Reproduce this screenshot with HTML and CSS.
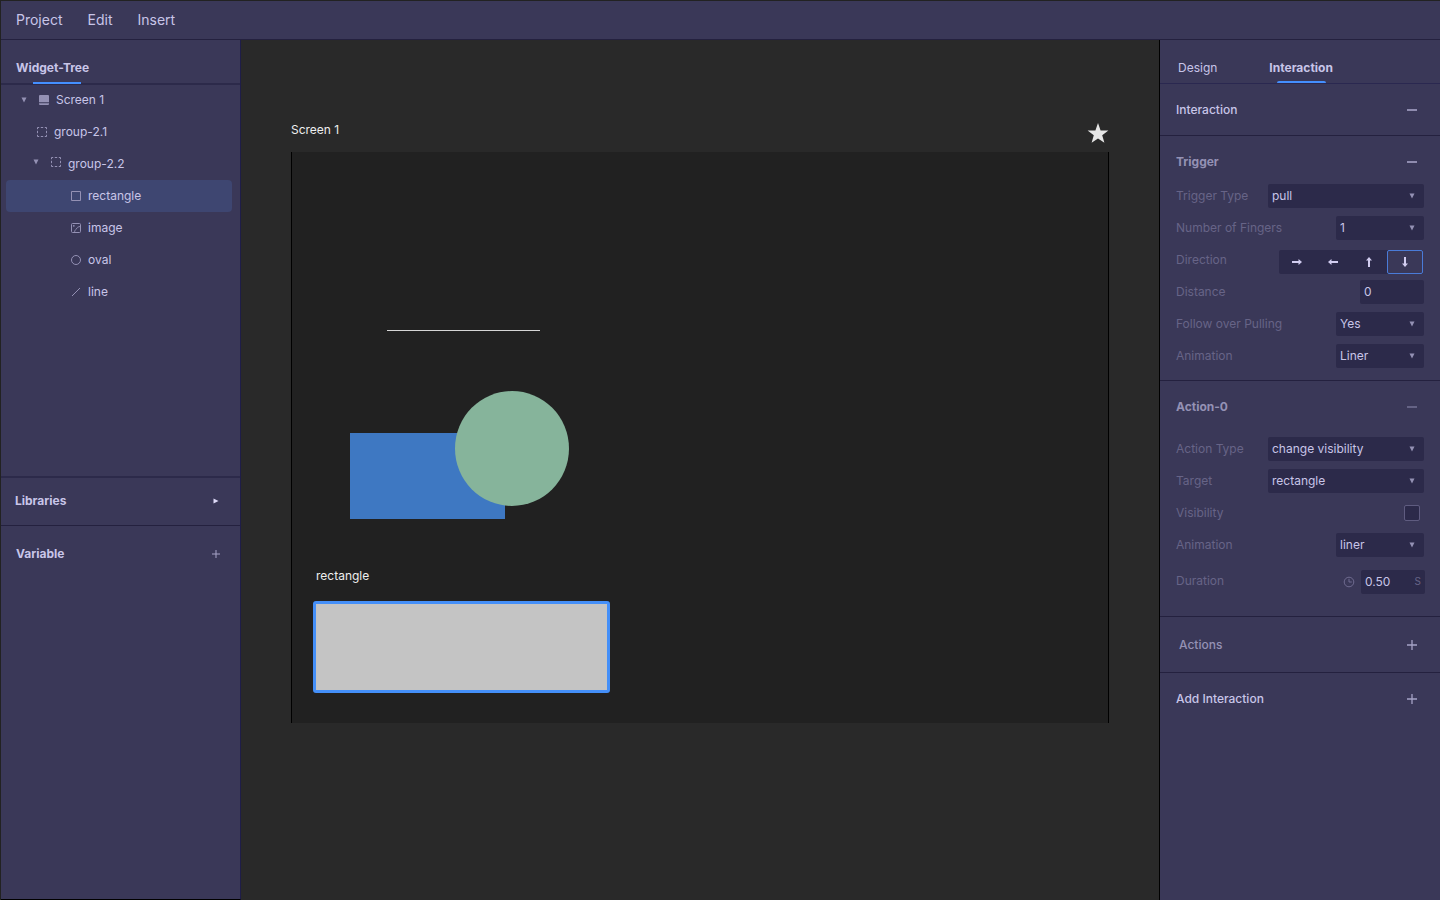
FILE: index.html
```html
<!DOCTYPE html>
<html lang="en">
<head>
<meta charset="utf-8">
<meta name="viewport" content="width=device-width, initial-scale=1">
<title>Widget editor</title>
<link rel="stylesheet" href="styles.css">
</head>
<body>
<svg class="defs" width="0" height="0" aria-hidden="true">
  <symbol id="caret-down" viewBox="0 0 6 6"><path d="M0.5 0.5h5L3 5.5z" fill="currentColor"/></symbol>
  <symbol id="caret-right" viewBox="0 0 6 6"><path d="M0.5 0.5v5L5.5 3z" fill="currentColor"/></symbol>
  <symbol id="minus" viewBox="0 0 10 10"><path d="M0 5h10" stroke="currentColor" stroke-width="1.6"/></symbol>
  <symbol id="plus" viewBox="0 0 10 10"><path d="M0 5h10M5 0v10" stroke="currentColor" stroke-width="1.3"/></symbol>
  <symbol id="group" viewBox="0 0 10 10"><path d="M0.5 2.2V0.5H2.2M3.8 0.5h2.4M7.8 0.5h1.7V2.2M9.5 3.8v2.4M9.5 7.8v1.7H7.8M6.2 9.5H3.8M2.2 9.5H0.5V7.8M0.5 6.2V3.8" fill="none" stroke="currentColor"/></symbol>
  <symbol id="arrow" viewBox="0 0 12 12"><path d="M1 6h7" stroke="currentColor" stroke-width="2"/><path d="M7.5 3L11 6L7.5 9z" fill="currentColor"/></symbol>
</svg>
<div class="app">
  <nav class="menubar">
    <button class="menu" type="button">Project</button>
    <button class="menu" type="button">Edit</button>
    <button class="menu" type="button">Insert</button>
  </nav>

  <aside class="panel left">
    <h2 class="panel-title"><span class="title-text">Widget-Tree</span></h2>
    <ul class="tree">
      <li class="node level-0"><svg class="caret"><use href="#caret-down"/></svg><svg class="glyph" viewBox="0 0 10 10"><path d="M1 0h8a1 1 0 0 1 1 1v6.2H0V1a1 1 0 0 1 1-1zM0 8.2h10v.8a1 1 0 0 1-1 1H1a1 1 0 0 1-1-1z" fill="currentColor"/></svg>Screen 1</li>
      <li class="node level-1"><svg class="glyph"><use href="#group"/></svg>group-2.1</li>
      <li class="node level-2"><svg class="caret"><use href="#caret-down"/></svg><svg class="glyph"><use href="#group"/></svg>group-2.2</li>
      <li class="node level-3 selected"><svg class="glyph" viewBox="0 0 10 10"><path d="M.5 .5h9v9h-9z" fill="none" stroke="currentColor"/></svg>rectangle</li>
      <li class="node level-3"><svg class="glyph" viewBox="0 0 10 10"><rect x=".5" y=".5" width="9" height="9" rx="1" fill="none" stroke="currentColor"/><circle cx="2.8" cy="2.8" r=".9" fill="currentColor"/><path d="M3.5 9.5C3.7 7.6 4.3 6.6 5.4 6C5.8 4.6 7 3.7 9.5 3.4" fill="none" stroke="currentColor" stroke-width=".9"/></svg>image</li>
      <li class="node level-3"><svg class="glyph" viewBox="0 0 10 10"><circle cx="5" cy="5" r="4.5" fill="none" stroke="currentColor"/></svg>oval</li>
      <li class="node level-3"><svg class="glyph" viewBox="0 0 10 10"><path d="M1 9L9 1" stroke="currentColor"/></svg>line</li>
    </ul>
    <section class="fold libraries"><h3 class="fold-title">Libraries</h3><button class="tool bright" type="button" aria-label="Open libraries"><svg class="caret"><use href="#caret-right"/></svg></button></section>
    <section class="fold variable"><h3 class="fold-title">Variable</h3><button class="tool" type="button" aria-label="Add variable"><svg class="sign small"><use href="#plus"/></svg></button></section>
  </aside>

  <main class="canvas">
    <header class="board-head">
      <span class="board-name">Screen 1</span>
      <button class="star" type="button" aria-label="Favourite"><svg class="star-icon" viewBox="0 0 22 20"><path d="M11 0L13.6 7.4L21.4 7.6L15.2 12.3L17.4 19.7L11 15.4L4.6 19.7L6.8 12.3L.6 7.6L8.4 7.4z" fill="currentColor"/></svg></button>
    </header>
    <div class="board">
      <div class="shape-line"></div>
      <div class="shape-blue"></div>
      <div class="shape-oval"></div>
      <span class="shape-label">rectangle</span>
      <div class="shape-selected"></div>
    </div>
  </main>

  <aside class="panel right">
    <div class="tabs" role="tablist">
      <button class="tab" type="button" role="tab" aria-selected="false">Design</button>
      <button class="tab active" type="button" role="tab" aria-selected="true">Interaction</button>
    </div>
    <section class="section intro">
      <div class="section-head"><h3 class="heading strong">Interaction</h3><button class="tool" type="button" aria-label="Collapse interaction"><svg class="sign"><use href="#minus"/></svg></button></div>
    </section>
    <section class="section trigger">
      <div class="section-head"><h3 class="heading">Trigger</h3><button class="tool" type="button" aria-label="Collapse trigger"><svg class="sign"><use href="#minus"/></svg></button></div>
      <div class="row"><label class="label" for="ttype">Trigger Type</label><span class="select wide"><select class="field" id="ttype"><option>pull</option></select><svg class="caret"><use href="#caret-down"/></svg></span></div>
      <div class="row"><label class="label" for="fingers">Number of Fingers</label><span class="select"><select class="field" id="fingers"><option>1</option></select><svg class="caret"><use href="#caret-down"/></svg></span></div>
      <div class="row"><span class="label" id="dir">Direction</span>
        <div class="directions" role="group" aria-labelledby="dir">
          <button class="direction" type="button" aria-label="Right"><svg class="arrow"><use href="#arrow"/></svg></button>
          <button class="direction" type="button" aria-label="Left"><svg class="arrow to-left"><use href="#arrow"/></svg></button>
          <button class="direction" type="button" aria-label="Up"><svg class="arrow to-up"><use href="#arrow"/></svg></button>
          <button class="direction on" type="button" aria-label="Down" aria-pressed="true"><svg class="arrow to-down"><use href="#arrow"/></svg></button>
        </div>
      </div>
      <div class="row"><label class="label" for="distance">Distance</label><input class="field short" id="distance" type="text" value="0"></div>
      <div class="row"><label class="label" for="follow">Follow over Pulling</label><span class="select"><select class="field" id="follow"><option>Yes</option></select><svg class="caret"><use href="#caret-down"/></svg></span></div>
      <div class="row"><label class="label" for="tanim">Animation</label><span class="select"><select class="field" id="tanim"><option>Liner</option></select><svg class="caret"><use href="#caret-down"/></svg></span></div>
    </section>
    <section class="section action">
      <div class="section-head"><h3 class="heading">Action-0</h3><button class="tool dim" type="button" aria-label="Collapse action"><svg class="sign"><use href="#minus"/></svg></button></div>
      <div class="row"><label class="label" for="atype">Action Type</label><span class="select wide"><select class="field" id="atype"><option>change visibility</option></select><svg class="caret"><use href="#caret-down"/></svg></span></div>
      <div class="row"><label class="label" for="target">Target</label><span class="select wide"><select class="field" id="target"><option>rectangle</option></select><svg class="caret"><use href="#caret-down"/></svg></span></div>
      <div class="row"><label class="label" for="visible">Visibility</label><input class="check" id="visible" type="checkbox"></div>
      <div class="row"><label class="label" for="aanim">Animation</label><span class="select"><select class="field" id="aanim"><option>liner</option></select><svg class="caret"><use href="#caret-down"/></svg></span></div>
      <div class="row duration"><label class="label" for="duration">Duration</label><svg class="clock" viewBox="0 0 12 12"><circle cx="6" cy="6" r="4.8" fill="none" stroke="currentColor"/><path d="M6 2.8V6h2.8" fill="none" stroke="currentColor"/></svg><span class="timed"><input class="field" id="duration" type="text" value="0.50"><span class="unit">S</span></span></div>
    </section>
    <section class="section actions">
      <div class="section-head"><h3 class="heading medium">Actions</h3><button class="tool" type="button" aria-label="Add action"><svg class="sign"><use href="#plus"/></svg></button></div>
    </section>
    <section class="section add">
      <div class="section-head"><h3 class="heading strong">Add Interaction</h3><button class="tool" type="button" aria-label="Add interaction"><svg class="sign"><use href="#plus"/></svg></button></div>
    </section>
  </aside>
</div>
</body>
</html>
```

FILE: styles.css
```css
:root {
  --panel: #3a3858;
  --field: #2c2a4a;
  --edge: #24213f;
  --text: #c8c5e8;
  --muted: #9491b4;
  --faint: #676487;
  --blue: #448fff;
}
* { box-sizing: border-box; }
body, h2, h3, ul { margin: 0; padding: 0; }
body {
  background: #292929;
  color: var(--text);
  font: 12px/16px Inter, sans-serif;
}
.defs { position: absolute; }
button, input, select { font: inherit; color: inherit; }
button { border: 0; padding: 0; background: none; }
svg { display: block; flex: none; }

.app {
  display: grid;
  grid-template: auto 1fr / 240px 1fr 281px;
  min-height: 100vh;
  border-top: 1px solid #222;
  border-left: 1px solid #222;
}
.menubar {
  grid-column: 1 / -1;
  display: flex;
  gap: 25px;
  height: 39px;
  padding: 0 15px;
  background: var(--panel);
  border-bottom: 1px solid var(--edge);
  font-size: 14px;
}
.panel { background: var(--panel); }
.left {
  display: flex;
  flex-direction: column;
  border-right: 1px solid #1f1d48;
  border-bottom: 1px solid #000;
}
.panel-title {
  display: flex;
  height: 45px;
  padding: 20px 15px 0;
  border-bottom: 2px solid var(--field);
  font-size: 12px;
  font-weight: 700;
}
.title-text { position: relative; }
.title-text::after {
  content: "";
  position: absolute;
  left: 17px;
  top: 22px;
  width: 48px;
  height: 2px;
  background: var(--blue);
}
.tree {
  height: 392px;
  margin-top: -1px;
  padding: 0 8px 0 5px;
  list-style: none;
}
.node {
  display: flex;
  align-items: center;
  gap: 7px;
  height: 32px;
  border-radius: 4px;
}
.caret { width: 6px; height: 6px; color: var(--muted); }
.glyph { width: 10px; height: 10px; color: var(--muted); }
.level-0 { padding-left: 15px; }
.level-0 .caret { margin-right: 5px; }
.level-1 { padding-left: 31px; }
.level-2 { padding-left: 27px; }
.level-2 .caret { margin-right: 5px; }
.level-2 svg { margin-bottom: 4px; }
.level-3 { padding-left: 65px; }
.selected { background: #3e4671; }
.fold {
  display: flex;
  align-items: center;
  justify-content: space-between;
  padding: 0 16px 0 14px;
}
.fold-title { font-size: 12px; font-weight: 700; }
.libraries {
  height: 50px;
  padding-bottom: 1px;
  border-top: 2px solid var(--field);
  border-bottom: 1px solid var(--edge);
}
.variable { height: 56px; padding-left: 15px; }
.tool {
  display: grid;
  place-items: center;
  width: 16px;
  height: 24px;
  color: #a5a2c6;
}
.bright .caret { color: #dedaf8; }
.dim { color: #716e92; }
.sign { width: 10px; height: 10px; }
.small { width: 8px; height: 8px; }

.canvas { min-width: 0; padding: 80px 50px; color: #eee; }
.board-head {
  display: flex;
  justify-content: space-between;
  height: 32px;
}
.board-name { padding-top: 2px; }
.star { height: 26px; color: #e6e6e6; }
.star-icon { width: 22px; height: 20px; }
.board {
  position: relative;
  height: 571px;
  background: #212121;
  border: solid #000;
  border-width: 0 1px;
}
.shape-line, .shape-blue, .shape-oval, .shape-label, .shape-selected { position: absolute; }
.shape-line { left: 95px; top: 178px; width: 153px; height: 1px; background: #d6d6d6; }
.shape-blue { left: 58px; top: 281px; width: 155px; height: 86px; background: #3e78c2; }
.shape-oval { left: 163px; top: 239px; width: 114px; height: 115px; border-radius: 50%; background: #86b49b; }
.shape-label { left: 24px; top: 416px; }
.shape-selected { left: 21px; top: 449px; width: 297px; height: 92px; background: #c4c4c4; border: 3px solid #448ff8; border-radius: 3px; }

.right { border-left: 1px solid #000; }
.tabs {
  display: flex;
  gap: 52px;
  height: 44px;
  padding-left: 18px;
  border-bottom: 1px solid #2a2850;
}
.tab { position: relative; height: 56px; line-height: 16px; }
.active { font-weight: 700; }
.active::after {
  content: "";
  position: absolute;
  left: 8px;
  top: 41px;
  width: 49px;
  height: 2px;
  border-radius: 2px 2px 0 0;
  background: var(--blue);
}
.section {
  display: flex;
  flex-direction: column;
  gap: 8px;
  padding: 14px 16px 12px;
  border-bottom: 1px solid var(--edge);
}
.section-head {
  display: flex;
  align-items: center;
  justify-content: space-between;
  height: 24px;
}
.section-head .tool { margin-right: 4px; }
.heading { font-size: 12px; font-weight: 700; color: var(--muted); }
.medium { font-weight: 500; }
.strong { font-weight: 500; color: var(--text); }
.intro { padding-bottom: 13px; }
.trigger .section-head { margin-bottom: 2px; }
.action { padding-bottom: 22px; }
.action .section-head { margin-bottom: 10px; }
.actions { padding: 16px 16px 15px 19px; }
.add { padding-top: 14px; border-bottom: 0; }
.row {
  display: flex;
  align-items: center;
  justify-content: space-between;
  height: 24px;
}
.label { color: var(--faint); }
.select, .timed { display: grid; width: 88px; }
.wide { width: 156px; }
.select > *, .timed > * { grid-area: 1 / 1; }
.select .caret { place-self: center end; margin-right: 9px; pointer-events: none; }
.field {
  appearance: none;
  width: 100%;
  height: 24px;
  padding: 0 4px;
  background: var(--field);
  border: 0;
  border-radius: 2px;
  outline: 0;
}
input.field { padding-bottom: 1px; }
.short, .timed { width: 64px; }
.directions {
  display: flex;
  width: 144px;
  height: 24px;
  margin: 4px 1px 0 0;
  background: var(--field);
  border-radius: 2px;
}
.direction { width: 36px; display: grid; place-items: center; border-radius: 2px; }
.on { background: var(--panel); border: 1px solid #4a7bd8; }
.arrow { width: 12px; height: 12px; color: #d2cdf0; }
.to-left { transform: rotate(180deg); }
.to-up { transform: rotate(-90deg); }
.to-down { transform: rotate(90deg); }
.check {
  appearance: none;
  width: 16px;
  height: 16px;
  margin: 0 4px 0 0;
  background: var(--field);
  border: 1px solid #5f5c80;
  border-radius: 2px;
}
.duration { gap: 6px; margin: 5px -1px 0 0; }
.duration .label { flex: 1; padding-bottom: 2px; }
.clock { width: 12px; height: 12px; color: #6f6b90; }
.unit { place-self: center end; margin-right: 4px; padding-bottom: 2px; color: var(--faint); font-size: 10px; }
```
